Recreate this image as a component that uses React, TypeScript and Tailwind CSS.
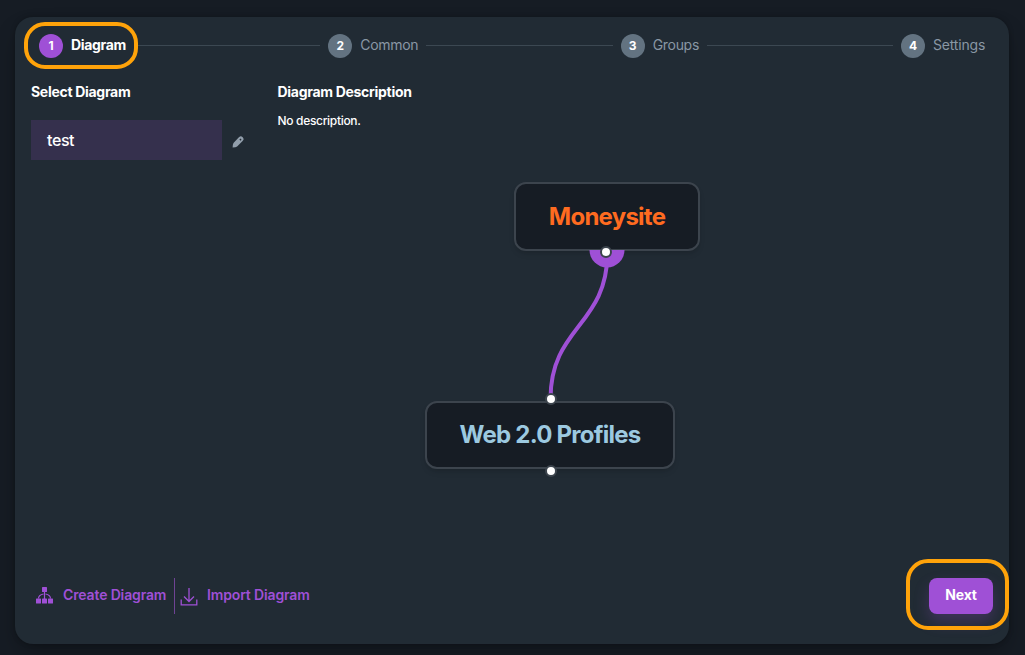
import React from "react";

function Step({ n, label, width, active = false }: { n: number; label: string; width: string; active?: boolean }) {
  return (
    <div className="flex shrink-0 items-center gap-2">
      <span
        className={`mt-px flex size-6 items-center justify-center rounded-full text-[12px] font-bold text-white ${active ? "bg-[#9f50d6]" : "bg-[#637381]"}`}
      >
        {n}
      </span>
      <span
        className={`-mt-px whitespace-nowrap text-[14px] leading-[22px] ${width} ${active ? "font-bold text-white" : "text-[#8997a4]"}`}
      >
        {label}
      </span>
    </div>
  );
}

function Line() {
  return <span className="h-px flex-1 bg-[#3c4852]" />;
}

function Handle({ className }: { className: string }) {
  return <span className={`absolute size-3 rounded-full border-2 border-[#3c444d] bg-white ${className}`} />;
}

export default function App() {
  return (
    <div className="flex h-[655px] w-[1025px] overflow-hidden bg-[#161c24] pt-[17px] pl-[15px] font-['Inter','Liberation_Sans',sans-serif] text-white">
      <main className="relative flex h-[627px] w-[994px] flex-col rounded-[18px] bg-[#212b34] shadow-[0_0_5px_rgba(0,0,0,0.25),0_12px_24px_-4px_rgba(0,0,0,0.3)]">
        <nav className="flex h-[57px] items-center gap-2 px-6">
          <Step n={1} label="Diagram" width="w-[55px] tracking-[-0.35px]" active />
          <Line />
          <Step n={2} label="Common" width="w-[58px] tracking-[-0.3px]" />
          <Line />
          <Step n={3} label="Groups" width="w-[46px] tracking-[-0.3px]" />
          <Line />
          <Step n={4} label="Settings" width="w-[52px] tracking-[-0.18px]" />
        </nav>

        <div className="flex flex-1 px-4">
          <section className="w-[246px]">
            <h2 className="mt-[7px] text-[14px] leading-[22px] font-bold tracking-[-0.3px]">Select Diagram</h2>
            <div className="mt-[17px] flex items-center">
              <div className="flex h-10 w-[191px] items-center bg-[#35304d] px-4 text-[16px] font-medium tracking-[-0.4px]">
                test
              </div>
              <svg className="mt-1 ml-[10px] size-3" viewBox="0 0 12 12" fill="#919eab">
                <path
                  d="M6.9 1.3L8 .5Q9.3 -.1 10.7 1.3Q12.1 2.8 11.3 4.1L10.6 5L5.1 10.4Q4 11.2 .6 11.4Q.7 8.2 1.5 6.9ZM8.4 2.6L7.4 3.6L8.5 4.7L9.5 3.7Z"
                  fillRule="evenodd"
                />
              </svg>
            </div>
          </section>
          <section className="flex-1 pl-[0.5px]">
            <h2 className="mt-[7px] text-[14px] leading-[22px] font-bold tracking-[-0.3px]">Diagram Description</h2>
            <p className="mt-[9px] text-[12px] leading-[18px] font-medium tracking-[-0.32px]">No description.</p>
          </section>
        </div>

        <footer className="mb-[30px] flex h-9 items-center pr-4 pl-5 text-[14px] font-semibold tracking-[-0.14px] text-[#9f50d6]">
          <button className="flex items-center gap-[9px]">
            <svg className="-mt-0.5 size-[19px]" viewBox="0 0 19 19" fill="currentColor">
              <rect x="7" y="1" width="5" height="5" rx=".6" />
              <rect x="1" y="12.5" width="5" height="5" rx=".6" />
              <rect x="7" y="12.5" width="5" height="5" rx=".6" />
              <rect x="13" y="12.5" width="5" height="5" rx=".6" />
              <path d="M9.5 6V13M8.5 8Q3.5 9 3.5 12.5M10.5 8Q15.5 9 15.5 12.5" stroke="currentColor" fill="none" strokeWidth="1.2" />
            </svg>
            <span className="mb-[3px] w-[103px] whitespace-nowrap">Create Diagram</span>
          </button>
          <span className="ml-2 h-9 w-px bg-[#6f4394]" />
          <button className="flex items-center gap-[9px] pl-[5px]">
            <svg className="mt-0.5 size-[18px]" viewBox="0 0 18 18" fill="none" stroke="currentColor" strokeWidth="1.3">
              <path d="M9 0V13.5M4 8.5L9 13.5L14 8.5M1.2 11.5V16.8H16.8V11.5" />
            </svg>
            <span className="mb-[3px] whitespace-nowrap">Import Diagram</span>
          </button>
          <button className="ml-auto h-9 w-16 rounded-lg bg-[#9f50d6] pb-[3px] text-[14px] font-bold tracking-[-0.2px] text-white shadow-[0_8px_16px_rgba(159,80,214,0.24)]">
            Next
          </button>
        </footer>

        <div className="absolute top-[165px] left-[499px] flex h-[69px] w-[186px] items-center justify-center rounded-xl border-2 border-[#3c444d] bg-[#161c24] text-[24px] font-bold tracking-[-0.75px] text-[#ff6b20] shadow-md">
          Moneysite
        </div>
        <svg className="absolute top-[233px] left-[525px] h-[150px] w-[100px]" viewBox="540 250 100 150">
          <path d="M589.5 250H624.5A17.5 17.5 0 0 1 589.5 250Z" fill="#9f50d6" />
          <path d="M607.5 252C607.5 326 550.5 326 550.5 399" fill="none" stroke="#9f50d6" strokeWidth="4" />
        </svg>
        <div className="absolute top-[384px] left-[410px] flex h-[68px] w-[250px] items-center justify-center rounded-xl border-2 border-[#3c444d] bg-[#161c24] text-[24px] font-bold tracking-[-0.75px] text-[#9cc9e0] shadow-md">
          Web 2.0 Profiles
        </div>
        <Handle className="top-[229px] left-[585px]" />
        <Handle className="top-[376px] left-[530px]" />
        <Handle className="top-[448px] left-[530px]" />

        <div className="absolute top-[5px] left-[9px] h-[47px] w-[114px] rounded-[21px] border-4 border-[#ffa30a]" />
        <div className="absolute top-[542px] left-[891px] h-[71px] w-[103px] rounded-[22px] border-4 border-[#ffa30a]" />
      </main>
    </div>
  );
}
